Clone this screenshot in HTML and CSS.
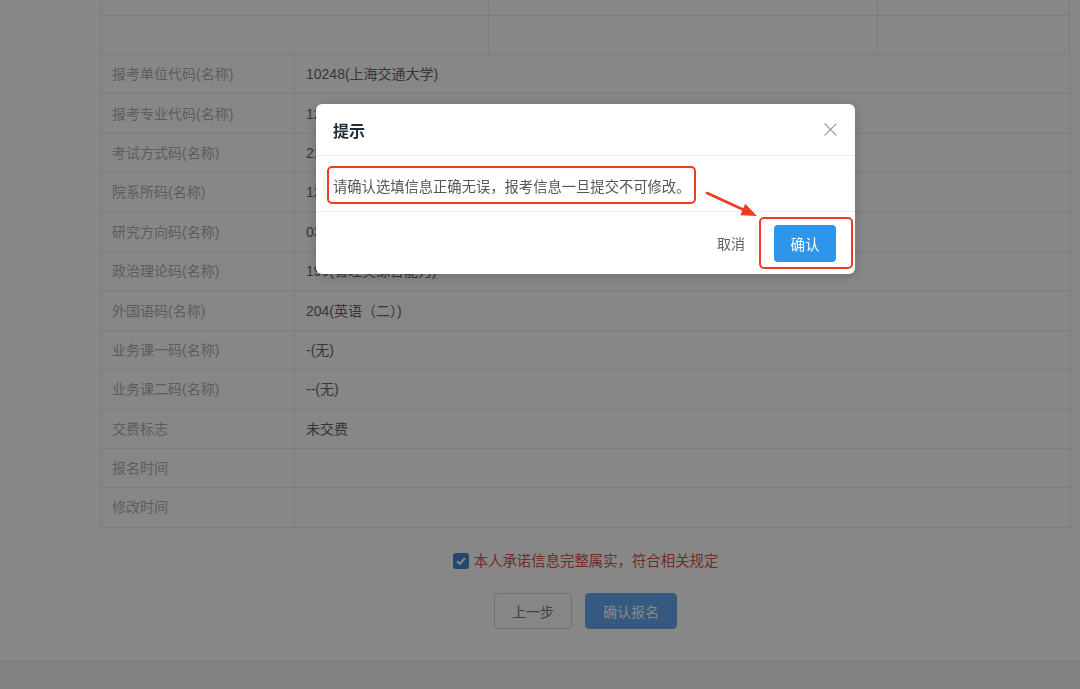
FILE: index.html
```html
<!DOCTYPE html>
<html lang="zh-CN">
<head>
    <meta charset="UTF-8">
    <meta name="viewport" content="width=device-width, initial-scale=1.0">
    <title>报名信息确认</title>
    <link rel="stylesheet" href="styles.css">
</head>
<body>
    <div class="page">
        <div class="main">
            <table class="top-table">
                <tr class="cut-row">
                    <td class="c1"></td><td class="c2"></td><td class="c3"></td>
                </tr>
                <tr class="full-row">
                    <td class="c1"></td><td class="c2"></td><td class="c3"></td>
                </tr>
            </table>

            <table class="info-table">
                <tr><td class="label">报考单位代码(名称)</td><td class="value">10248(上海交通大学)</td></tr>
                <tr><td class="label">报考专业代码(名称)</td><td class="value">125</td></tr>
                <tr><td class="label">考试方式码(名称)</td><td class="value">21</td></tr>
                <tr><td class="label">院系所码(名称)</td><td class="value">120</td></tr>
                <tr><td class="label">研究方向码(名称)</td><td class="value">03</td></tr>
                <tr><td class="label">政治理论码(名称)</td><td class="value">199(管理类综合能力)</td></tr>
                <tr><td class="label">外国语码(名称)</td><td class="value">204(英语（二）)</td></tr>
                <tr><td class="label">业务课一码(名称)</td><td class="value">-(无)</td></tr>
                <tr><td class="label">业务课二码(名称)</td><td class="value">--(无)</td></tr>
                <tr><td class="label">交费标志</td><td class="value">未交费</td></tr>
                <tr><td class="label">报名时间</td><td class="value"></td></tr>
                <tr><td class="label">修改时间</td><td class="value"></td></tr>
            </table>

            <div class="agree">
                <span class="checkbox">
                    <svg width="10" height="8" viewBox="0 0 10 8"><path d="M1 4.2 L3.8 6.8 L9 1.2" fill="none" stroke="#fff" stroke-width="2"/></svg>
                </span>
                <span class="agree-text">本人承诺信息完整属实，符合相关规定</span>
            </div>

            <div class="actions">
                <button class="btn btn-default">上一步</button>
                <button class="btn btn-primary">确认报名</button>
            </div>
        </div>
        <div class="footer"></div>
    </div>

    <div class="mask"></div>

    <div class="dialog">
        <div class="dialog-header">
            <span class="dialog-title">提示</span>
            <span class="dialog-close">
                <svg width="13" height="13" viewBox="0 0 13 13"><path d="M0.5 0.5 L12.5 12.5 M12.5 0.5 L0.5 12.5" stroke="#a3a3a3" stroke-width="1.3"/></svg>
            </span>
        </div>
        <div class="dialog-body">
            <span class="mark-box">请确认选填信息正确无误，报考信息一旦提交不可修改。</span>
        </div>
        <div class="dialog-footer">
            <span class="cancel">取消</span>
            <span class="mark-box mark-btn">
                <button class="ok-btn">确认</button>
            </span>
        </div>
        <svg class="arrow" width="58" height="34" viewBox="0 0 58 34">
            <path d="M3 5 L40 22" stroke="#ee3b22" stroke-width="2.6" stroke-linecap="round"/>
            <polygon points="53,28 41.2,15.8 36.4,27.2" fill="#ee3b22"/>
        </svg>
    </div>
</body>
</html>
```

FILE: styles.css
```css
html, body {
    margin: 0;
    height: 100%;
    overflow: hidden;
}

body {
    background-color: #fff;
    font-family: "Liberation Sans", "Noto Sans CJK SC", sans-serif;
    color: #333;
}

.page {
    display: flex;
    flex-direction: column;
    min-height: 100%;
}

.main {
    width: 971px;
    margin-left: 100px;
}

/* tables behind the mask */
.top-table,
.info-table {
    border-collapse: collapse;
}

.top-table {
    width: 970px;
}

.top-table td {
    padding: 0;
    border: 1px solid #ebebeb;
    border-top: none;
}

.top-table .c1 { width: 387px; }
.top-table .c2 { width: 388px; }

.cut-row { height: 15px; }
.full-row { height: 39px; }

.info-table {
    width: 971px;
}

.info-table tr {
    height: 39.4px;
}

.info-table td {
    border: 1px solid #ebebeb;
    border-top: none;
    padding: 0 11px;
    font-size: 14px;
    line-height: 20px;
}

.info-table .label {
    width: 171px;
    color: #b0b0b0;
}

.info-table .value {
    color: #666;
}

.agree {
    display: flex;
    justify-content: center;
    align-items: center;
    gap: 5px;
    margin-top: 23px;
    height: 20px;
}

.checkbox {
    display: flex;
    justify-content: center;
    align-items: center;
    width: 16px;
    height: 16px;
    border-radius: 3px;
    background-color: #4586cc;
}

.agree-text {
    font-size: 14.4px;
    line-height: 20px;
    color: #d35450;
}

.actions {
    display: flex;
    justify-content: center;
    gap: 13px;
    margin-top: 22px;
}

.btn {
    height: 36px;
    padding: 0 17px;
    border-radius: 4px;
    font-family: inherit;
    font-size: 14px;
}

.btn-default {
    background-color: #fff;
    border: 1px solid #d4d4d4;
    color: #777;
}

.btn-primary {
    background-color: #64a8f0;
    border: 1px solid #64a8f0;
    color: #fff;
}

.footer {
    flex: 1;
    margin-top: 32px;
    border-top: 1px solid #e6e6e6;
    background-color: #f6f6f6;
}

/* modal */
.mask {
    position: fixed;
    inset: 0;
    background-color: rgba(0, 0, 0, 0.47);
}

.dialog {
    position: fixed;
    left: 316px;
    top: 104px;
    width: 539px;
    background-color: #fff;
    border-radius: 6px;
    box-shadow: 0 2px 12px rgba(0, 0, 0, 0.2);
}

.dialog-header {
    display: flex;
    justify-content: space-between;
    align-items: center;
    height: 51px;
    padding: 0 18px 0 17px;
    border-bottom: 1px solid #eeeeee;
}

.dialog-title {
    font-size: 16px;
    font-weight: bold;
    color: #1f2d3d;
}

.dialog-close {
    display: flex;
}

.dialog-body {
    display: flex;
    padding: 10px 11px 7px;
    border-bottom: 1px solid #eeeeee;
}

.mark-box {
    display: inline-flex;
    align-items: center;
    box-sizing: border-box;
    border: 2px solid #ee3b22;
    border-radius: 5px;
}

.dialog-body .mark-box {
    height: 38px;
    padding: 0 4px;
    font-size: 14.3px;
    color: #555;
}

.dialog-footer {
    display: flex;
    justify-content: flex-end;
    align-items: center;
    height: 62px;
    padding-right: 2px;
}

.cancel {
    margin-right: 14px;
    font-size: 14px;
    color: #606266;
}

.mark-btn {
    padding: 6px 15px 5px 13px;
}

.ok-btn {
    width: 62px;
    height: 37px;
    border: none;
    border-radius: 4px;
    background-color: #2d96ea;
    color: #fff;
    font-family: inherit;
    font-size: 14.5px;
}

.arrow {
    position: absolute;
    left: 388px;
    top: 84px;
}
```
